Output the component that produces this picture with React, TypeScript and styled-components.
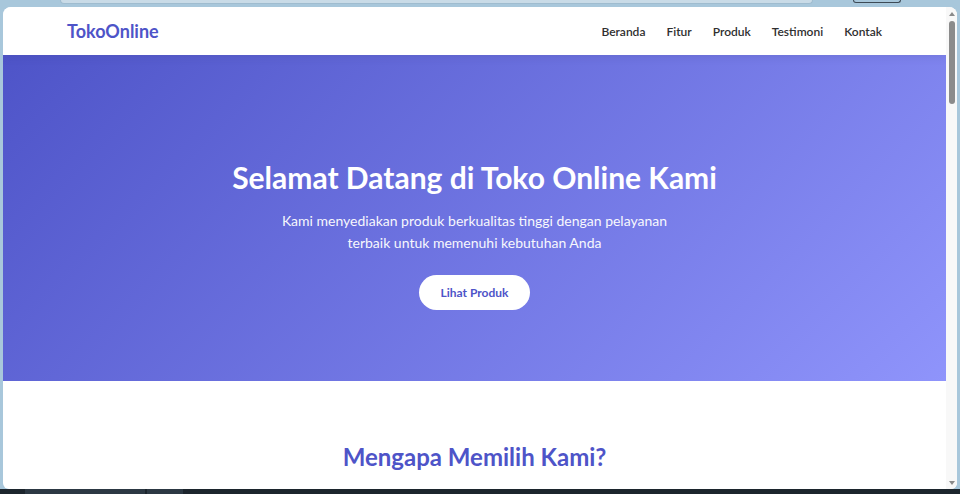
import styled, { createGlobalStyle } from "styled-components";

const GlobalStyle = createGlobalStyle`
  * {
    box-sizing: border-box;
  }

  html,
  body {
    margin: 0;
    height: 494px;
    overflow: hidden;
    background: #a8c7db;
    font-family: "Segoe UI", Lato, "Noto Sans", sans-serif;
  }
`;

const navLinks = ["Beranda", "Fitur", "Produk", "Testimoni", "Kontak"];

const App = () => {
  return (
    <>
      <GlobalStyle />
      <Shell>
        <TopStrip>
          <AddressBar />
          <ProfileButton />
        </TopStrip>

        <Window>
          <Page>
            <Header>
              <Logo>TokoOnline</Logo>
              <Nav>
                {navLinks.map((link) => (
                  <NavLink key={link} href={`#${link.toLowerCase()}`}>
                    {link}
                  </NavLink>
                ))}
              </Nav>
            </Header>

            <Hero id="beranda">
              <HeroTitle>Selamat Datang di Toko Online Kami</HeroTitle>
              <HeroText>
                Kami menyediakan produk berkualitas tinggi dengan pelayanan
                terbaik untuk memenuhi kebutuhan Anda
              </HeroText>
              <HeroButton href="#produk">Lihat Produk</HeroButton>
            </Hero>

            <Features id="fitur">
              <SectionTitle>Mengapa Memilih Kami?</SectionTitle>
              <SectionText>
                Berbagai keunggulan yang kami tawarkan untuk Anda
              </SectionText>
            </Features>
          </Page>

          <Scrollbar>
            <ArrowUp />
            <Track>
              <Thumb />
            </Track>
            <ArrowDown />
          </Scrollbar>
        </Window>

        <Taskbar>
          <TaskItem $width={120} />
          <TaskItem $width={36} />
        </Taskbar>
      </Shell>
    </>
  );
};

const Shell = styled.div`
  height: 494px;
  display: grid;
  grid-template-rows: 7px 1fr 5px;
`;

const TopStrip = styled.div`
  display: flex;
  align-items: flex-start;
  padding-left: 60px;
`;

const AddressBar = styled.div`
  width: 753px;
  height: 4px;
  background: #c9dbe7;
  border: 1px solid #9fbccf;
  border-top: none;
  border-radius: 0 0 8px 8px;
`;

const ProfileButton = styled.div`
  margin-left: 40px;
  width: 48px;
  height: 3px;
  border: 1px solid #3d4a55;
  border-top: none;
  border-radius: 0 0 8px 8px;
`;

const Window = styled.div`
  margin: 0 3px;
  display: flex;
  background: #ffffff;
  border-radius: 8px 8px 6px 6px;
  overflow: hidden;
`;

const Page = styled.main`
  flex: 1;
  display: flex;
  flex-direction: column;
  overflow: hidden;
`;

const Header = styled.header`
  position: relative;
  z-index: 1;
  height: 48px;
  flex-shrink: 0;
  display: flex;
  align-items: center;
  justify-content: space-between;
  padding: 0 64px;
  background: #ffffff;
  box-shadow: 0 2px 8px rgba(60, 60, 120, 0.15);
`;

const Logo = styled.div`
  font-size: 18px;
  font-weight: 700;
  color: #4e54c8;
`;

const Nav = styled.nav`
  display: flex;
  gap: 21px;
`;

const NavLink = styled.a`
  font-size: 12px;
  font-weight: 600;
  color: #2f2f2f;
  text-decoration: none;
`;

const Hero = styled.section`
  height: 326px;
  flex-shrink: 0;
  display: flex;
  flex-direction: column;
  align-items: center;
  padding-top: 101px;
  text-align: center;
  color: #ffffff;
  background: linear-gradient(135deg, #4e54c8 0%, #8f94fb 100%);
`;

const HeroTitle = styled.h1`
  margin: 0 0 12px;
  font-size: 30px;
  line-height: 42px;
  font-weight: 700;
`;

const HeroText = styled.p`
  margin: 0 0 21px;
  max-width: 400px;
  font-size: 14px;
  line-height: 22px;
  opacity: 0.95;
`;

const HeroButton = styled.a`
  display: inline-flex;
  align-items: center;
  justify-content: center;
  width: 111px;
  height: 35px;
  border-radius: 18px;
  background: #ffffff;
  color: #4e54c8;
  font-size: 12px;
  font-weight: 700;
  text-decoration: none;
`;

const Features = styled.section`
  flex-shrink: 0;
  padding: 60px 20px 0;
  text-align: center;
`;

const SectionTitle = styled.h2`
  margin: 0 0 14px;
  font-size: 24px;
  line-height: 32px;
  font-weight: 700;
  color: #4e54c8;
`;

const SectionText = styled.p`
  margin: 0;
  font-size: 14px;
  color: #666666;
`;

const Scrollbar = styled.div`
  width: 11px;
  flex-shrink: 0;
  display: flex;
  flex-direction: column;
  align-items: center;
  background: #f8f8f8;
  padding: 5px 0 4px;
`;

const ArrowUp = styled.div`
  width: 0;
  height: 0;
  border-left: 3px solid transparent;
  border-right: 3px solid transparent;
  border-bottom: 4px solid #8a8a8a;
`;

const ArrowDown = styled.div`
  width: 0;
  height: 0;
  border-left: 3px solid transparent;
  border-right: 3px solid transparent;
  border-top: 4px solid #8a8a8a;
`;

const Track = styled.div`
  flex: 1;
  width: 100%;
  display: flex;
  justify-content: center;
  padding-top: 5px;
`;

const Thumb = styled.div`
  width: 6px;
  height: 83px;
  border-radius: 3px;
  background: #8b8b8b;
`;

const Taskbar = styled.div`
  display: flex;
  gap: 2px;
  padding-left: 25px;
  background: #1c252d;
`;

const TaskItem = styled.div<{ $width: number }>`
  width: ${({ $width }) => $width}px;
  height: 100%;
  background: #2c3843;
`;

export default App;
